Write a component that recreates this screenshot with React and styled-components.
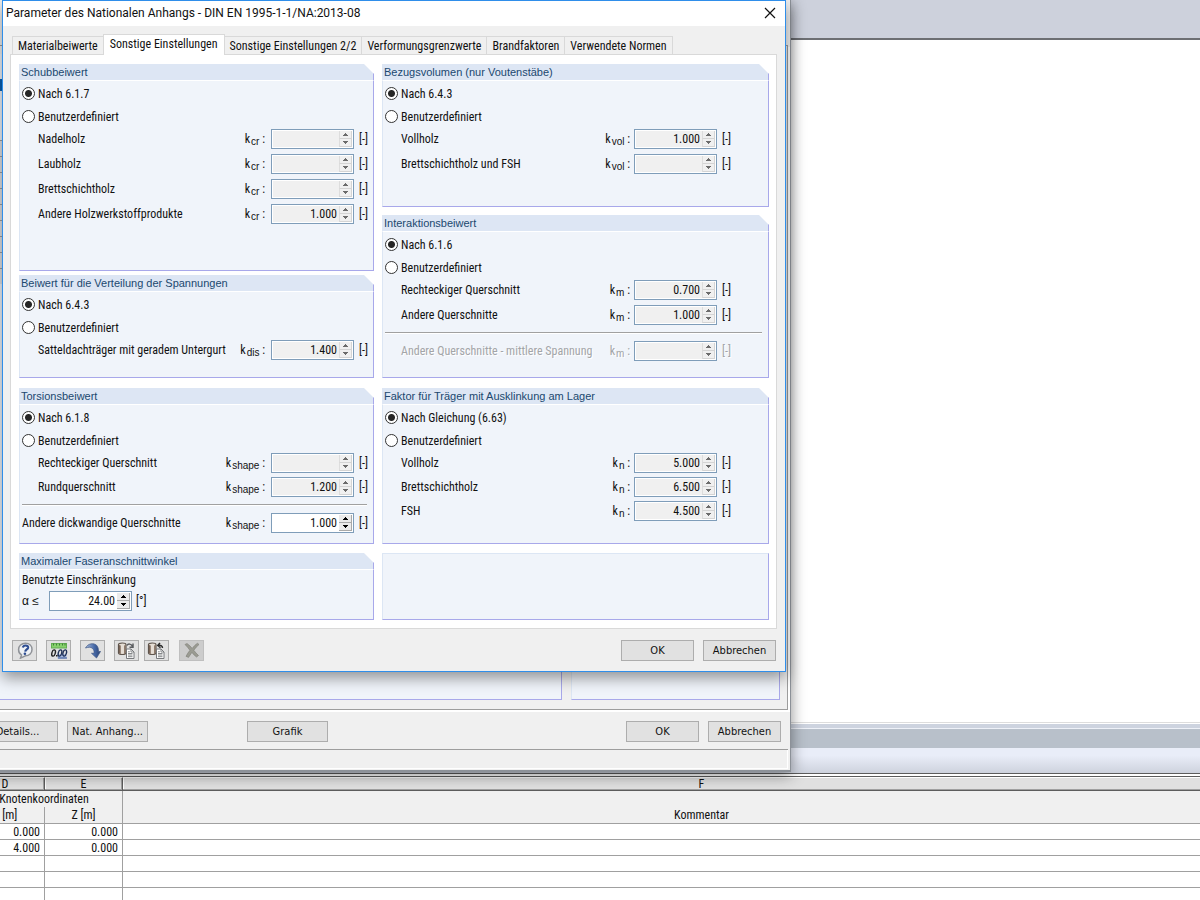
import React, { useId } from 'react';
import styled, { createGlobalStyle, css } from 'styled-components';

const GlobalStyle = createGlobalStyle`
  *, *::before, *::after { box-sizing: border-box; }
  body {
    margin: 0;
    background: #fff;
    color: #111;
    font: 12px/16px "Roboto Condensed", Roboto, sans-serif;
  }
  button, input { font: inherit; color: inherit; margin: 0; }
`;

/* ---------- main application behind the dialogs ---------- */

const Desktop = styled.div`
  position: relative;
  display: flex;
  flex-direction: column;
  height: 100vh;
  overflow: hidden;
`;

const AppToolbar = styled.div`
  height: 40px;
  flex: none;
  background: #cdd1dc;
  border-bottom: 2px solid #6d6f73;
`;

const Workspace = styled.div`
  flex: 1;
  background: #fff;
`;

const Dock = styled.section`
  flex: none;
  height: 178px;
  overflow: hidden;
  border-top: 1px solid #ddd;
`;

const DockSplitter = styled.div`
  height: 5px;
  margin-top: 1px;
  background: #cdd3df;
  border-bottom: 1px solid #eef1f8;
`;

const DockCaption = styled.div`
  height: 19px;
  background: #b8c0ca;
`;

const DockToolbar = styled.div`
  height: 26px;
  background: linear-gradient(#e9edf8 30%, #ced3de);
  border-bottom: 1px solid #5d5d5d;
`;

const Sheet = styled.table`
  width: calc(100% + 115px);
  margin: 2px 0 0 -34px;
  table-layout: fixed;
  border-collapse: separate;
  border-spacing: 0;
  border-top: 1px solid #5d5d5d;
  background: #fff;
`;

const ColumnLetter = styled.th`
  height: 14px;
  padding: 0;
  font-weight: 400;
  line-height: 12px;
  background: #e0e0e0;
  border-top: 1px solid #fff;
  border-right: 1px solid #5d5d5d;
  border-bottom: 1px solid #5d5d5d;
  box-shadow: inset -1px -1px #a0a0a0, inset 1px 0 #fff;
`;

const SheetHead = styled.th`
  height: ${p => (p.$last ? 17 : 16)}px;
  padding: 0;
  font-weight: 400;
  line-height: 15px;
  background: #f0f0f0;
  border-right: 1px solid #a0a0a0;
  border-bottom: ${p => (p.$last ? '1px solid #a0a0a0' : '0')};
`;

const Cell = styled.td`
  height: 16px;
  padding: 1px 4px 0 0;
  line-height: 14px;
  text-align: right;
  border-right: 1px solid #a0a0a0;
  border-bottom: 1px solid #a0a0a0;
`;

/* ---------- module window ---------- */

const ModuleWindow = styled.section`
  position: absolute;
  top: 0;
  left: -32px;
  width: max(823px, 65vw);
  display: flex;
  flex-direction: column;
  background: #f0f0f0;
  border: solid #8c9198;
  border-width: 0 1px 2px 0;
  box-shadow: 0 3px 14px rgba(0, 0, 0, 0.45);
`;

const ModuleBody = styled.div`
  display: grid;
  grid-template-columns: 594fr 209fr;
  gap: 9px;
  min-height: 665px;
  margin: 45px 2px 0 0;
  padding: 8px 7px 9px 0;
  border: solid #9d9d9d;
  border-width: 1px 1px 1px 0;
  box-shadow: 2px 2px #fff;
`;

const ModulePane = styled.div`
  background: #f0f4fa;
  border: 1px solid #a8a8ea;
  border-top: 0;
  border-left-color: #dce6f4;
`;

const ModuleFooter = styled.footer`
  display: flex;
  align-items: flex-end;
  gap: 9px;
  height: 40px;
  padding: 0 7px 7px 9px;
  border-bottom: 1px solid #9d9d9d;
  margin-right: 2px;
`;

const ModuleStatus = styled.div`
  height: 19px;
  margin-right: 2px;
  border: solid #fff;
  border-width: 0 1px 1px 0;
`;

const ModuleEdge = styled.div`
  height: 1px;
`;

const NavSliver = styled.div`
  width: 34px;
  padding-top: 1px;
`;

const NavSelected = styled.div`
  height: 12px;
  margin: 24px 0 49px;
  background: #0b63b6;
`;

const NavLine = styled.div`
  height: 16px;
  background: #e1e3e6;
  border-top: 1px solid #a0a0a0;
`;

/* ---------- shared controls ---------- */

const PushButton = styled.button`
  width: ${p => (p.$wide ? 81 : 73)}px;
  height: 21px;
  padding: 1px 0 0;
  background: #e1e1e1;
  border: 1px solid #adadad;
  font-family: "DejaVu Sans Condensed", "DejaVu Sans", sans-serif;
  font-size: 11px;
  line-height: 18px;
  white-space: nowrap;
`;

const Spacer = styled.div`
  flex: ${p => (p.$width ? `0 0 ${p.$width}px` : '1')};
`;

/* ---------- parameter dialog ---------- */

const Dialog = styled.section`
  position: absolute;
  top: 0;
  left: 2px;
  width: max(784px, 65vw);
  background: #f0f0f0;
  border: 1px solid #2f8eea;
  box-shadow: 0 6px 14px rgba(0, 0, 0, 0.4);
`;

const TitleBar = styled.header`
  display: flex;
  align-items: center;
  justify-content: space-between;
  height: 25px;
  padding: 0 9px 1px 3px;
  background: #fff;
`;

const Title = styled.h1`
  margin: 0;
  font: 400 12px/16px Roboto, sans-serif;
`;

const CloseButton = styled.button`
  display: flex;
  padding: 0;
  border: 0;
  background: none;
`;

const TabList = styled.div`
  display: flex;
  align-items: flex-end;
  height: 28px;
  padding-left: 9px;
`;

const Tab = styled.button`
  flex: none;
  height: 18px;
  padding: 1px 5px 0;
  background: #f0f0f0;
  border: 1px solid #d9d9d9;
  border-left-width: ${p => (p.$first ? 1 : 0)}px;
  border-bottom: 0;
  line-height: 16px;
  white-space: nowrap;
  ${p => p.$active && css`
    position: relative;
    height: 21px;
    margin: 0 0 -1px -1px;
    padding: 0 6px 2px;
    border-left-width: 1px;
    background: #fff;
  `}
`;

const TabPanel = styled.div`
  display: grid;
  grid-template-columns: 355fr 387fr;
  grid-template-rows: minmax(315px, auto) minmax(156px, auto) minmax(67px, auto);
  gap: 9px 8px;
  margin: 0 8px 0 7px;
  padding: 9px 7px 8px 8px;
  background: #fff;
  border: 1px solid #d9d9d9;
`;

const Stack = styled.div`
  display: grid;
  grid-template-rows: ${p => p.$rows};
  gap: ${p => p.$gap}px;
  padding-bottom: 1px;
`;

const GroupBox = styled.fieldset`
  display: flex;
  flex-direction: column;
  min-width: 0;
  margin: 0;
  padding: 0;
  border: 0;
`;

const GroupTitle = styled.h2`
  flex: none;
  height: 16px;
  margin: 0;
  padding-left: 2px;
  background: #dde6f4;
  border-right: 1px solid #a8a8ea;
  clip-path: polygon(0 0, calc(100% - 10px) 0, 100% 10px, 100% 100%, 0 100%);
  color: #20486f;
  font: 400 11px/16px "Liberation Sans", Arial, sans-serif;
  white-space: nowrap;
`;

const GroupBody = styled.div`
  flex: 1;
  display: flex;
  flex-direction: column;
  padding: 1px 0 0 2px;
  background: #f0f4fa;
  border: 1px solid #a8a8ea;
  border-left-color: #dce6f4;
  border-top-color: ${p => (p.$untitled ? '#dce6f4' : '#fff')};
`;

const RadioLabel = styled.label`
  display: flex;
  align-items: center;
  gap: 3px;
  height: 23px;
`;

const Radio = styled.input`
  appearance: none;
  width: 13px;
  height: 13px;
  border: 1px solid #333;
  border-radius: 50%;
  background: #fff;
  &:checked {
    background: radial-gradient(circle, #262626 0 3px, #fff 4px);
  }
`;

const Fields = styled.div`
  display: flex;
  flex-direction: column;
  gap: ${p => p.$gap}px;
  padding-top: 1px;
`;

const FieldRow = styled.div`
  display: flex;
  align-items: center;
  height: 20px;
  padding-left: ${p => (p.$flush ? 0 : 16)}px;
  ${p => p.$muted && css`
    color: #a3a5a8;
    text-shadow: 1px 1px #fff;
  `}
`;

const FieldLabel = styled.label`
  flex: 1;
  white-space: nowrap;
`;

const SymbolText = styled.span`
  padding-right: ${p => (p.$tail > 30 ? 4 : 6)}px;
  white-space: pre;
`;

const Subscript = styled.span`
  position: relative;
  top: 2px;
  margin: 0 0 0 1px;
  font: 10px/12px "Liberation Sans", Arial, sans-serif;
`;

const Unit = styled.span`
  width: ${p => p.$tail}px;
  padding-left: 5px;
`;

const Spin = styled.span`
  display: flex;
  width: 83px;
  height: 20px;
  padding: 1px;
  background: #fff;
  border: 1px solid #7f9db9;
`;

const SpinInput = styled.input`
  flex: 1;
  min-width: 0;
  padding: 0 2px 1px;
  border: 0;
  background: #fff;
  text-align: right;
  &:disabled { background: #f0f0f0; color: #111; }
`;

const SpinButtons = styled.span`
  display: grid;
  grid-template-rows: 8px 8px;
  width: 13px;
`;

const SpinButton = styled.button`
  display: grid;
  place-items: center;
  padding: 0;
  border: solid #a9a9a9;
  border-width: 0 1px 1px 0;
  background: #ebebeb;
  color: #000;
  &:disabled {
    color: #6b6b6b;
    border-color: #d4d4d4;
    border-left: 1px solid #ddd;
    background: #f0f0f0;
  }
`;

const Divider = styled.hr`
  width: calc(100% - 6px);
  height: 2px;
  margin: 7px 0;
  border: 0;
  border-top: 1px solid #a0a0a0;
  border-bottom: 1px solid #fff;
`;

const PlainLine = styled.div`
  height: 20px;
  line-height: 18px;
`;

const AngleRow = styled.div`
  display: flex;
  align-items: center;
  gap: 4px;
  height: 20px;
`;

const AngleLabel = styled.label`
  width: 23px;
  font: 12px/16px "Liberation Sans", Arial, sans-serif;
  white-space: nowrap;
`;

const DialogFooter = styled.footer`
  display: flex;
  align-items: center;
  gap: 9px;
  height: 42px;
  padding: 1px 9px 0;
`;

const ButtonPair = styled.div`
  display: flex;
  gap: 5px;
  margin-right: 1px;
`;

const IconButton = styled.button`
  display: grid;
  place-items: center;
  width: 25px;
  height: 21px;
  padding: 0;
  background: #e1e1e1;
  border: 1px solid #adadad;
  &:disabled { background: #ccc; border-color: #bfbfbf; }
`;

/* ---------- icons ---------- */

const HelpIcon = () => (
  <svg width="18" height="17" viewBox="0 0 18 17">
    <path d="M9.500 1.200c4 0 6.500 2.700 6.500 6.300s-2.700 6.300-6.500 6.300l-5 2.300 1-3.100C3.600 12 2.600 10.200 2.600 7.500c0-3.600 2.900-6.300 6.900-6.300z" fill="#eef1f5" stroke="#909398" strokeWidth="1.500" />
    <path d="M6.800 5.600C7.200 4 8.200 3.500 9.600 3.500c1.700 0 2.700.8 2.500 2.200-.3 1.700-2.600 1.900-2.900 3.900" fill="none" stroke="#2d4d92" strokeWidth="2.200" />
    <circle cx="8.900" cy="11.800" r="1.300" fill="#2d4d92" />
  </svg>
);

const DecimalsIcon = () => (
  <svg width="18" height="18" viewBox="0 0 18 18">
    <path d="M7.500 12h9v4.500h-9z" fill="#a9bbe0" />
    <rect x="1.500" y="1.500" width="15" height="4.500" fill="#86d06c" stroke="#62ad52" />
    <path d="M3.500 1.500v2M6.500 1.500v2M9.500 1.500v2M12.500 1.500v2M15 1.500v2" stroke="#3f8236" />
    <g fill="none" strokeWidth="1.400">
      <ellipse cx="3.600" cy="11" rx="1.700" ry="3.200" transform="rotate(15 3.600 11)" stroke="#222" />
      <ellipse cx="10" cy="11" rx="1.700" ry="3.200" transform="rotate(15 10 11)" stroke="#1f3157" />
      <ellipse cx="14.700" cy="11" rx="1.700" ry="3.200" transform="rotate(15 14.700 11)" stroke="#1f3157" />
    </g>
    <rect x="6" y="13" width="1.500" height="1.500" fill="#222" />
    <path d="M8 16h9" stroke="#4a66a0" strokeWidth="1.200" />
  </svg>
);

const ArrowIcon = () => (
  <svg width="18" height="18" viewBox="0 0 18 18">
    <defs>
      <linearGradient id="arrow-fill" x1="0" x2="1">
        <stop offset="0" stopColor="#a9bcdc" />
        <stop offset=".6" stopColor="#4669a8" />
        <stop offset="1" stopColor="#2c4372" />
      </linearGradient>
    </defs>
    <path d="M1.500 6C4 1.300 9.500.6 12.500 3.200c1.500 1.500 2 3.500 2 6.300h2L12.500 16 7.500 11.300h2.600C10.500 6.800 7.500 3.800 1.500 6z" fill="url(#arrow-fill)" stroke="#3c5484" strokeWidth=".7" />
  </svg>
);

const DataIcon = ({ back }) => (
  <svg width="19" height="18" viewBox="0 0 19 18">
    <path d="M1.500 2.500c0-2 7.500-2 7.500 0v8.500c0 2-7.500 2-7.500 0z" fill="#e6ded5" stroke="#5f554d" strokeWidth="1.200" />
    <path d="M2 3v8c.4.700 1 1 1.700 1V3.500zM8.500 3v8c-.3.600-.7.800-1.300.9V3.500z" fill="#7a6455" />
    <path d="M9.500 7h4.500l3 3v6.500H9.500z" fill="#fff" stroke="#77797c" />
    <path d="M14 7v3h3M11 11.500h4.500M11 13h4.500M11 14.700h4.500M11 9.800h1.800" fill="none" stroke="#77797c" strokeWidth=".9" />
    {back ? (
      <path d="M15.500 6C15.500 3.500 13.500 3 11 3.500M13 1L10.800 3.500 13.500 5.600" fill="none" stroke="#2b2b2b" strokeWidth="1.500" />
    ) : (
      <path d="M10 3.500c1-2 4-2 5.500 1M16 1.500v3.700h-3.500" fill="none" stroke="#5b5d60" strokeWidth="1.500" />
    )}
  </svg>
);

const DeleteIcon = () => (
  <svg width="18" height="17" viewBox="0 0 18 17">
    <path d="M2 2.500L4 1.500c2 1.300 3.700 3 5.200 4.900C10.800 4.300 12.500 2.500 14.500 1.300L16 2.500c-2 1.600-3.700 3.500-5.200 5.800 1.500 2 3 3.700 4.700 5.200L13.500 15c-1.700-1.200-3.200-2.700-4.600-4.600-1.200 1.800-2.200 3.300-3.400 5L3 14.300c1.200-2.300 2.500-4.200 3.900-6C5.400 6.100 3.800 4.200 2 2.500z" fill="#9a9b92" stroke="#7d7e77" strokeWidth=".6" />
  </svg>
);

const Triangle = ({ down }) => (
  <svg width="5" height="3" viewBox="0 0 5 3" shapeRendering="crispEdges">
    <path d={down ? 'M0 0h5v1H4v1H3v1H2V2H1V1H0z' : 'M2 0h1v1h1v1h1v1H0V2h1V1h1z'} fill="currentColor" />
  </svg>
);

/* ---------- composed parts ---------- */

function NumberBox({ id, value, enabled }) {
  return (
    <Spin>
      <SpinInput id={id} type="text" defaultValue={value} disabled={!enabled} />
      <SpinButtons>
        <SpinButton type="button" aria-label="Erhöhen" disabled={!enabled}><Triangle /></SpinButton>
        <SpinButton type="button" aria-label="Verringern" disabled={!enabled}><Triangle down /></SpinButton>
      </SpinButtons>
    </Spin>
  );
}

function Field({ label, sub, value, tail, enabled, flush, muted }) {
  const id = useId();
  return (
    <FieldRow $flush={flush} $muted={muted}>
      <FieldLabel htmlFor={id}>{label}</FieldLabel>
      <SymbolText $tail={tail}>k<Subscript>{sub}</Subscript> :</SymbolText>
      <NumberBox id={id} value={value} enabled={enabled} />
      <Unit $tail={tail}>[-]</Unit>
    </FieldRow>
  );
}

function Group({ title, norm, fields, gap = 4, tail, extra }) {
  const name = useId();
  return (
    <GroupBox aria-label={title}>
      <GroupTitle>{title}</GroupTitle>
      <GroupBody>
        <RadioLabel><Radio type="radio" name={name} defaultChecked />{norm}</RadioLabel>
        <RadioLabel><Radio type="radio" name={name} />Benutzerdefiniert</RadioLabel>
        <Fields $gap={gap}>
          {fields.map(([label, sub, value]) => (
            <Field key={label} label={label} sub={sub} value={value} tail={tail} />
          ))}
        </Fields>
        {extra && <><Divider /><Field {...extra} tail={tail} /></>}
      </GroupBody>
    </GroupBox>
  );
}

const LEFT_TAIL = 19;
const RIGHT_TAIL = 51;

const tabs = [
  'Materialbeiwerte',
  'Sonstige Einstellungen',
  'Sonstige Einstellungen 2/2',
  'Verformungsgrenzwerte',
  'Brandfaktoren',
  'Verwendete Normen',
];

function ParameterDialog() {
  return (
    <Dialog role="dialog" aria-label="Parameter des Nationalen Anhangs">
      <TitleBar>
        <Title>Parameter des Nationalen Anhangs - DIN EN 1995-1-1/NA:2013-08</Title>
        <CloseButton type="button" aria-label="Schließen">
          <svg width="12" height="12" viewBox="0 0 12 12">
            <path d="M1 1l10 10M11 1L1 11" stroke="#111" strokeWidth="1.200" />
          </svg>
        </CloseButton>
      </TitleBar>
      <TabList role="tablist">
        {tabs.map((tab, i) => (
          <Tab key={tab} type="button" role="tab" aria-selected={i === 1} $first={i === 0} $active={i === 1}>{tab}</Tab>
        ))}
      </TabList>
      <TabPanel role="tabpanel">
        <Stack $rows="207fr 103fr" $gap={4}>
          <Group
            title="Schubbeiwert" norm="Nach 6.1.7" tail={LEFT_TAIL} gap={5}
            fields={[['Nadelholz', 'cr', ''], ['Laubholz', 'cr', ''], ['Brettschichtholz', 'cr', ''], ['Andere Holzwerkstoffprodukte', 'cr', '1.000']]}
          />
          <Group
            title="Beiwert für die Verteilung der Spannungen" norm="Nach 6.4.3" tail={LEFT_TAIL}
            fields={[['Satteldachträger mit geradem Untergurt', 'dis', '1.400']]}
          />
        </Stack>
        <Stack $rows="143fr 163fr" $gap={8}>
          <Group
            title="Bezugsvolumen (nur Voutenstäbe)" norm="Nach 6.4.3" tail={RIGHT_TAIL} gap={5}
            fields={[['Vollholz', 'vol', '1.000'], ['Brettschichtholz und FSH', 'vol', '']]}
          />
          <Group
            title="Interaktionsbeiwert" norm="Nach 6.1.6" tail={RIGHT_TAIL} gap={5}
            fields={[['Rechteckiger Querschnitt', 'm', '0.700'], ['Andere Querschnitte', 'm', '1.000']]}
            extra={{ label: 'Andere Querschnitte - mittlere Spannung', sub: 'm', value: '', muted: true }}
          />
        </Stack>
        <Group
          title="Torsionsbeiwert" norm="Nach 6.1.8" tail={LEFT_TAIL}
          fields={[['Rechteckiger Querschnitt', 'shape', ''], ['Rundquerschnitt', 'shape', '1.200']]}
          extra={{ label: 'Andere dickwandige Querschnitte', sub: 'shape', value: '1.000', enabled: true, flush: true }}
        />
        <Group
          title="Faktor für Träger mit Ausklinkung am Lager" norm="Nach Gleichung (6.63)" tail={RIGHT_TAIL}
          fields={[['Vollholz', 'n', '5.000'], ['Brettschichtholz', 'n', '6.500'], ['FSH', 'n', '4.500']]}
        />
        <GroupBox aria-label="Maximaler Faseranschnittwinkel">
          <GroupTitle>Maximaler Faseranschnittwinkel</GroupTitle>
          <GroupBody>
            <PlainLine>Benutzte Einschränkung</PlainLine>
            <AngleRow>
              <AngleLabel htmlFor="max-angle">α ≤</AngleLabel>
              <NumberBox id="max-angle" value="24.00" enabled />
              <span>[°]</span>
            </AngleRow>
          </GroupBody>
        </GroupBox>
        <GroupBody $untitled />
      </TabPanel>
      <DialogFooter>
        <IconButton type="button" aria-label="Hilfe"><HelpIcon /></IconButton>
        <IconButton type="button" aria-label="Einheiten und Dezimalstellen"><DecimalsIcon /></IconButton>
        <IconButton type="button" aria-label="Übernehmen"><ArrowIcon /></IconButton>
        <ButtonPair>
          <IconButton type="button" aria-label="Als Standard laden"><DataIcon /></IconButton>
          <IconButton type="button" aria-label="Als Standard speichern"><DataIcon back /></IconButton>
        </ButtonPair>
        <IconButton type="button" aria-label="Löschen" disabled><DeleteIcon /></IconButton>
        <Spacer />
        <PushButton type="button">OK</PushButton>
        <PushButton type="button">Abbrechen</PushButton>
      </DialogFooter>
    </Dialog>
  );
}

function ModulePage() {
  return (
    <ModuleWindow>
      <ModuleBody>
        <ModulePane>
          <NavSliver>
            <NavSelected />
            {Array.from({ length: 9 }, (_, i) => <NavLine key={i} />)}
          </NavSliver>
        </ModulePane>
        <ModulePane />
      </ModuleBody>
      <ModuleFooter>
        <PushButton type="button" $wide>Details...</PushButton>
        <PushButton type="button" $wide>Nat. Anhang...</PushButton>
        <Spacer $width={81} />
        <PushButton type="button" $wide>Grafik</PushButton>
        <Spacer />
        <PushButton type="button">OK</PushButton>
        <PushButton type="button">Abbrechen</PushButton>
      </ModuleFooter>
      <ModuleStatus />
      <ModuleEdge />
    </ModuleWindow>
  );
}

const nodes = [['0.000', '0.000'], ['4.000', '0.000'], ['', ''], ['', ''], ['', '']];

const CoordinateColumn = styled.col`
  width: ${p => p.$width}px;
`;

function NodeSheet() {
  return (
    <Sheet>
      <colgroup>
        <CoordinateColumn $width={79} />
        <CoordinateColumn $width={78} />
        <col />
      </colgroup>
      <thead>
        <tr>
          <ColumnLetter>D</ColumnLetter>
          <ColumnLetter>E</ColumnLetter>
          <ColumnLetter>F</ColumnLetter>
        </tr>
        <tr>
          <SheetHead colSpan={2}>Knotenkoordinaten</SheetHead>
          <SheetHead />
        </tr>
        <tr>
          <SheetHead $last>X [m]</SheetHead>
          <SheetHead $last>Z [m]</SheetHead>
          <SheetHead $last>Kommentar</SheetHead>
        </tr>
      </thead>
      <tbody>
        {nodes.map(([x, z], i) => (
          <tr key={i}>
            <Cell>{x}</Cell>
            <Cell>{z}</Cell>
            <Cell />
          </tr>
        ))}
      </tbody>
    </Sheet>
  );
}

export default function App() {
  return (
    <Desktop>
      <GlobalStyle />
      <AppToolbar />
      <Workspace />
      <Dock>
        <DockSplitter />
        <DockCaption />
        <DockToolbar />
        <NodeSheet />
      </Dock>
      <ModulePage />
      <ParameterDialog />
    </Desktop>
  );
}
